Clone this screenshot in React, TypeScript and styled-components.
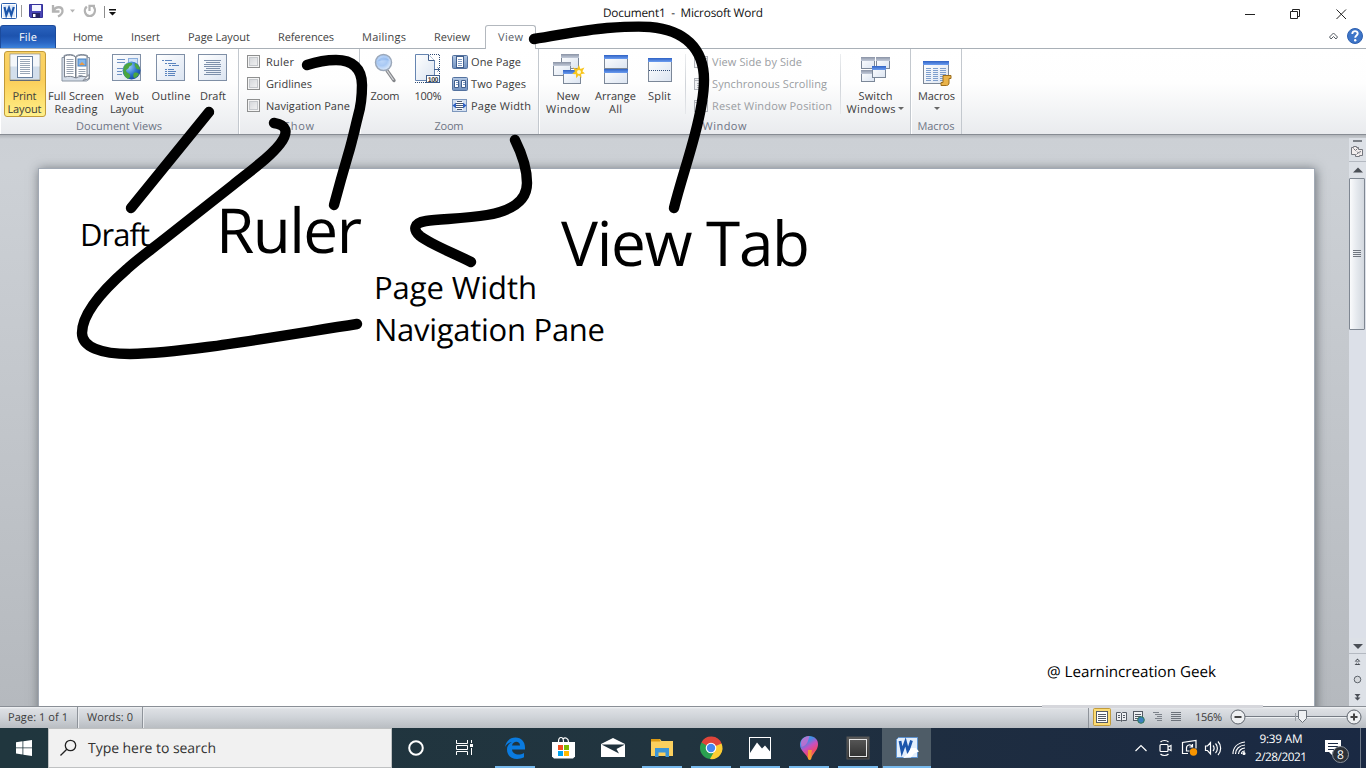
import React, { useLayoutEffect, useRef } from "react";
import styled, { createGlobalStyle, css } from "styled-components";

const GlobalStyle = createGlobalStyle`
  * {
    box-sizing: border-box;
  }

  body {
    margin: 0;
    overflow: hidden;
    background: #fff;
    font-family: "Open Sans", "Noto Sans", sans-serif;
    text-rendering: geometricPrecision;
  }

  svg {
    display: block;
    flex-shrink: 0;
  }
`;

const Screen = styled.div`
  width: 1366px;
  height: 768px;
  display: flex;
  flex-direction: column;
  position: relative;
  overflow: hidden;
`;

/* ---------- text ---------- */

const TextSpan = styled.span`
  display: inline-block;
  white-space: pre;
`;

interface FitProps {
  width: number;
  children: string;
}

// spreads the letters so that the text takes the given width
const Fit: React.FC<FitProps> = ({ width, children }) => {
  const ref = useRef<HTMLSpanElement>(null);

  useLayoutEffect(() => {
    const el = ref.current;
    if (!el) return;
    el.style.letterSpacing = "0px";
    const natural = el.getBoundingClientRect().width;
    const spacing = (width - natural) / Math.max(children.length - 1, 1);
    el.style.letterSpacing = `${spacing}px`;
    el.style.marginRight = `${-spacing}px`;
  }, [width, children]);

  return <TextSpan ref={ref}>{children}</TextSpan>;
};

/* ---------- title bar ---------- */

const TitleBar = styled.header`
  height: 25px;
  display: grid;
  grid-template-columns: 603px 1fr 139px;
  background: #fff;
`;

const QuickAccess = styled.div`
  display: flex;
  align-items: flex-start;
`;

const Caption = styled.div`
  font-size: 11.8px;
  line-height: 27px;
  color: #111;
`;

const WindowButtons = styled.div`
  display: flex;
`;

/* ---------- tabs ---------- */

const TabBar = styled.nav`
  height: 24px;
  display: flex;
  background: #fff;
  border-bottom: 1px solid #a9b0b7;
`;

const FileTab = styled.div`
  width: 56px;
  height: 23px;
  margin-right: 3px;
  border: 1px solid #1c4b9c;
  border-bottom: none;
  border-radius: 3px 3px 0 0;
  background: linear-gradient(#2a62bd, #1d53ae 45%, #2a66c4 75%, #3d83dc);
  color: #fff;
  font-size: 11px;
  line-height: 23px;
  text-align: center;
`;

const Tab = styled.div<{ $width: number; $active?: boolean }>`
  width: ${(p) => p.$width}px;
  height: 23px;
  font-size: 11px;
  line-height: 25px;
  color: #444;
  text-align: center;

  ${(p) =>
    p.$active &&
    css`
      height: 24px;
      margin-left: 1px;
      border: 1px solid #b3b8be;
      border-bottom: none;
      border-radius: 3px 3px 0 0;
      background: #fff;
      color: #5a6069;
      line-height: 23px;
    `}
`;

const TabTools = styled.div`
  margin-left: auto;
  width: 39px;
  display: flex;
`;

/* ---------- ribbon ---------- */

const RibbonBar = styled.section`
  height: 86px;
  display: flex;
  background: linear-gradient(#fff, #fefefe 40%, #e9ebee);
  border-bottom: 1px solid #878c93;
`;

const Group = styled.div<{ $width: number }>`
  width: ${(p) => p.$width}px;
  display: flex;
  flex-direction: column;
  border-right: 1px solid #c3c8ce;
  box-shadow: inset 1px 0 #fff;
`;

const GroupBody = styled.div<{ $pad: number }>`
  height: 69px;
  padding: 2px 0 0 ${(p) => p.$pad}px;
  display: flex;
`;

const GroupName = styled.div`
  height: 16px;
  font-size: 11px;
  line-height: 17px;
  color: #6d7484;
  text-align: center;
`;

const BigButton = styled.div<{ $width: number; $active?: boolean }>`
  width: ${(p) => p.$width}px;
  height: 66px;
  display: flex;
  flex-direction: column;
  align-items: center;
  flex-shrink: 0;
  padding-top: 1px;
  color: #3b3b3b;
  font-size: 11px;
  line-height: 13px;
  border: 1px solid transparent;
  border-radius: 3px;

  ${(p) =>
    p.$active &&
    css`
      padding-right: 1px;
      border-color: #c29b3a;
      background: linear-gradient(#f9d266, #fbcf5c 45%, #fdde6d 70%, #fff08a);
    `}
`;

const BigIcon = styled.div`
  height: 34px;
  margin-bottom: 3px;
`;

const SmallColumn = styled.div<{ $muted?: boolean }>`
  display: flex;
  flex-direction: column;
  color: ${(p) => (p.$muted ? "#9a9da2" : "#3b3b3b")};
`;

const SmallRow = styled.div<{ $gap: number }>`
  height: 22px;
  display: flex;
  align-items: center;
  gap: ${(p) => p.$gap}px;
  font-size: 11px;
`;

const CheckBox = styled.span`
  width: 13px;
  height: 13px;
  margin-bottom: 2px;
  border: 1px solid #8e8f8f;
  background: linear-gradient(135deg, #cfd2d6, #f6f6f6);
  box-shadow: inset 0 0 0 1px #f4f4f4, inset 0 0 0 2px #c4c7cb;
`;

const Divider = styled.div<{ $left: number; $right: number }>`
  width: 1px;
  height: 60px;
  margin: 3px ${(p) => p.$right}px 0 ${(p) => p.$left}px;
  background: linear-gradient(#eceef0, #cfd3d8 50%, #e6e8eb);
`;

const ArrowDown = styled.i<{ $top?: boolean }>`
  display: ${(p) => (p.$top ? "block" : "inline-block")};
  margin-top: ${(p) => (p.$top ? 4 : 0)}px;
  border: 3px solid transparent;
  border-top-color: #666;
  border-bottom: none;
  vertical-align: 3px;
`;

/* ---------- document area ---------- */

const Workspace = styled.main`
  height: 571px;
  display: flex;
  justify-content: space-between;
  background: linear-gradient(#b0b4b9, #ccd0d5 4px, #cdd1d6 30px, #b5b9be);
  overflow: hidden;
`;

const Page = styled.div`
  width: 1275px;
  height: 560px;
  margin: 34px 0 0 39px;
  background: #fff;
  box-shadow: 0 0 0 1px #a1a9b4, 1px 1px 10px 1px rgba(50, 56, 64, 0.62);
`;

const ScrollBar = styled.div`
  width: 17px;
  height: 571px;
  padding-top: 3px;
  display: flex;
  flex-direction: column;
`;

const ScrollCell = styled.div<{ $height: number; $line?: boolean }>`
  height: ${(p) => p.$height}px;
  background: #dde1e7;
  border-bottom: ${(p) => (p.$line ? "1px solid #b4b9c1" : "none")};
`;

const ScrollTrack = styled.div`
  height: 460px;
  background: #dce0e8;
`;

const ScrollThumb = styled.div`
  height: 152px;
  width: 16px;
  border: 1px solid #7f8792;
  border-radius: 1px;
  background: linear-gradient(90deg, #fafbfc, #e4e8ed 50%, #d3d8df);
  display: flex;
  align-items: center;
  justify-content: center;
`;

const Note = styled.div<{ $x: number; $y: number; $size: number; $line: number }>`
  position: absolute;
  left: ${(p) => p.$x}px;
  top: ${(p) => p.$y}px;
  font-size: ${(p) => p.$size}px;
  line-height: ${(p) => p.$line}px;
  color: #000;
`;

const Smudge = styled.div`
  position: absolute;
  left: 1042px;
  top: 705px;
  width: 221px;
  height: 3px;
  background: #d6d7dc;
`;

const Ink = styled.svg`
  position: absolute;
  left: 0;
  top: 0;
  fill: none;
  stroke: #000;
  stroke-width: 10.4;
  stroke-linecap: round;
  stroke-linejoin: round;
`;

/* ---------- status bar ---------- */

const StatusBar = styled.footer`
  height: 22px;
  display: flex;
  border-top: 1px solid #8a8f96;
  background: linear-gradient(#f2f4f6, #dde0e4 2px, #cfd3d8 50%, #b9bdc2);
  color: #3c3c3c;
  font-size: 11px;
  line-height: 21px;
`;

const StatusCell = styled.div<{ $width: number; $pad: number }>`
  width: ${(p) => p.$width}px;
  padding-left: ${(p) => p.$pad}px;
  border-right: 1px solid #8e939a;
  box-shadow: 1px 0 #e8eaed;
`;

const ViewTools = styled.div`
  width: 278px;
  margin-left: auto;
  display: flex;
  border-left: 1px solid #8e939a;
`;

const ViewIcons = styled.div`
  width: 106px;
`;

const ZoomValue = styled.div`
  width: 35px;
`;

/* ---------- taskbar ---------- */

const TaskBar = styled.footer`
  height: 40px;
  display: flex;
  background: linear-gradient(90deg, #20363e, #21343f 50%, #1e2d40 68%, #1a2943);
`;

const StartButton = styled.div`
  width: 48px;
  padding: 12px 0 0 16px;
`;

const SearchBox = styled.div`
  width: 344px;
  display: flex;
  border: 1px solid #bfc1c2;
  background: #f1f1f1;
  color: #333;
  font-size: 14px;
  line-height: 40px;
`;

const TaskItem = styled.div<{ $width: number; $active?: boolean; $open?: boolean }>`
  width: ${(p) => p.$width}px;
  height: 40px;
  display: flex;
  flex-direction: column;
  align-items: center;
  justify-content: space-between;
  background: ${(p) => (p.$active ? "#4e5c67" : "transparent")};

  &::after {
    content: "";
    width: ${(p) => (p.$active ? "48px" : "40px")};
    height: 2px;
    background: ${(p) => (p.$open ? "#76b9ed" : "transparent")};
  }
`;

const Tray = styled.div`
  width: 237px;
  margin-left: auto;
  display: flex;
`;

const Clock = styled.div`
  width: 56px;
  padding-top: 2px;
  color: #fff;
  font-size: 11.8px;
  line-height: 18px;
  text-align: center;
`;

const ActionCenter = styled.div`
  width: 52px;
  height: 40px;
  padding-left: 16px;
  position: relative;
  border-right: 1px solid #6d7887;
`;

const Badge = styled.span`
  position: absolute;
  left: 23px;
  top: 18px;
  width: 17px;
  height: 17px;
  border: 1px solid #8b929b;
  border-radius: 50%;
  background: #2b3037;
  color: #fff;
  font-size: 12px;
  line-height: 15px;
  text-align: center;
`;

/* ---------- drawings ---------- */

const Gradients = () => (
  <svg width="0" height="0" style={{ position: "absolute" }}>
    <defs>
      <linearGradient id="sheet" x1="0" y1="0" x2="1" y2="1">
        <stop offset="0" stopColor="#fff" />
        <stop offset="1" stopColor="#dbe4f1" />
      </linearGradient>
      <linearGradient id="blueBar" x1="0" y1="0" x2="0" y2="1">
        <stop offset="0" stopColor="#2f62c4" />
        <stop offset="1" stopColor="#6c9df0" />
      </linearGradient>
      <linearGradient id="greyBar" x1="0" y1="0" x2="0" y2="1">
        <stop offset="0" stopColor="#8a93a5" />
        <stop offset="1" stopColor="#c3cbda" />
      </linearGradient>
      <linearGradient id="blueTile" x1="0" y1="0" x2="0" y2="1">
        <stop offset="0" stopColor="#b3c8e4" />
        <stop offset="1" stopColor="#6f90bf" />
      </linearGradient>
      <radialGradient id="globe" cx=".35" cy=".3" r=".8">
        <stop offset="0" stopColor="#9cd0f5" />
        <stop offset=".55" stopColor="#2c74cf" />
        <stop offset="1" stopColor="#123f96" />
      </radialGradient>
      <radialGradient id="glass" cx=".4" cy=".35" r=".7">
        <stop offset="0" stopColor="#c2dafa" />
        <stop offset=".5" stopColor="#a9c9f4" />
        <stop offset="1" stopColor="#e6f0fc" />
      </radialGradient>
      <linearGradient id="drop" x1="0" y1="0" x2=".5" y2="1">
        <stop offset="0" stopColor="#25c4ee" />
        <stop offset=".35" stopColor="#4d86e4" />
        <stop offset=".55" stopColor="#c451c2" />
        <stop offset=".8" stopColor="#f0476c" />
        <stop offset="1" stopColor="#f8a22c" />
      </linearGradient>
      <linearGradient id="box" x1="0" y1="0" x2="0" y2="1">
        <stop offset="0" stopColor="#5b5b5b" />
        <stop offset="1" stopColor="#2d2d2d" />
      </linearGradient>
    </defs>
  </svg>
);

const QuickIcons = () => (
  <svg width="124" height="25">
    <rect x="1.500" y="3.500" width="15" height="15" rx="1" fill="#fff" stroke="#2b5fad" />
    <rect x="3" y="5" width="12" height="12" fill="#dfeafa" />
    <path d="M4.500 7l1.800 8L9 8l2.300 7 2.500-8" fill="none" stroke="#1c56ab" strokeWidth="2.200" />
    <path d="M21.500 5v12" stroke="#9a9a9a" />
    <path d="M29.500 4.500h13v13h-12l-1-1z" fill="#4a46b4" stroke="#35329b" />
    <rect x="32" y="5" width="9" height="6" fill="#f4f6ff" />
    <rect x="32" y="13" width="8" height="5" fill="#272565" />
    <rect x="33" y="14" width="2.500" height="3" fill="#fff" />
    <path d="M53 5v6.500h6.500M53.500 11c2-5 9-5 9 0 0 2-1.500 4-4.500 5.500" fill="none" stroke="#b3b3b3" strokeWidth="2.300" />
    <path d="M70 9.500h5l-2.500 3z" fill="#b3b3b3" />
    <path d="M93.500 6.500c3 3.500 1 9.500-3.700 9.500s-6.700-6-3-9.500M89.500 11V5.800H95" fill="none" stroke="#b3b3b3" strokeWidth="2.200" />
    <path d="M104.500 6v12" stroke="#8c8c8c" />
    <path d="M109 9h7v1.500h-7zM109 12h7l-3.500 3.500z" fill="#111" />
  </svg>
);

const WindowIcons = () => (
  <svg width="139" height="25" fill="none" stroke="#222">
    <path d="M18 14.500h10" />
    <path d="M63.500 11.500h7v7h-7zM65.500 11.500v-2h7v7h-2" />
    <path d="M109.500 9.500l9.500 9.500M119 9.500L109.500 19" />
  </svg>
);

const TabToolIcons = () => (
  <svg width="39" height="23">
    <path d="M2.500 12l4-4 4 4-1.500 2-2.500-2.500L4 14z" fill="#fff" stroke="#555b63" />
    <circle cx="28" cy="11" r="7.500" fill="#3d75c8" stroke="#2e60b0" />
    <path d="M25.300 9c0-4 5.600-3.500 5.400-.3-.2 1.800-2.500 1.800-2.500 4" fill="none" stroke="#fff" strokeWidth="1.900" />
    <circle cx="28.200" cy="15.300" r="1.200" fill="#fff" />
  </svg>
);

const SHEET_LINES = [0, 1, 2, 3, 4, 5, 6, 7];

const PrintLayoutIcon = () => (
  <svg width="32" height="30">
    <rect x="1" y="1" width="30" height="26" fill="#d3dfec" stroke="#a9a28a" />
    <path d="M1.500 1.500h29v12h-29z" fill="#fff" opacity=".75" />
    <path d="M1 27.500h30" stroke="#666c75" />
    <rect x="8.500" y="3.500" width="15" height="21" fill="#fff" stroke="#68809f" />
    {SHEET_LINES.map((n) => (
      <path key={n} d={`M11 ${6.500 + n * 2}h10`} stroke="#9aa7b7" />
    ))}
  </svg>
);

const ReadingIcon = () => (
  <svg width="32" height="30">
    <path d="M2 4.500h2v-2c4-1.500 9-1.500 11.500 1 2.500-2.500 8-2.500 12-1v2h2V26l-3 2H2z" fill="#d5dde8" stroke="#8994a2" />
    <path d="M4.500 3c4-1.500 8.500-1.200 11 1v21c-3-2-7-2-11-1zM27 3c-4-1.500-8.500-1.200-11 1v21c3-2 7-2 11-1z" fill="#fff" stroke="#7b828e" />
    {SHEET_LINES.map((n) => (
      <path key={n} d={`M6.500 ${6.500 + n * 2}h7`} stroke="#9aa4b2" />
    ))}
    <path d="M18.500 16.500h7M18.500 18.500h7M18.500 20.500h7M18.500 22.500h4" stroke="#9aa4b2" />
    <rect x="18" y="6" width="8" height="7" fill="#7fb5ec" stroke="#4b81bd" />
    <path d="M19 12l3-3 3 3z" fill="#e99a45" />
    <path d="M23 27.500l6-6v4z" fill="#fff" stroke="#7b828e" />
  </svg>
);

const WebIcon = () => (
  <svg width="32" height="30">
    <rect x="1.500" y="1.500" width="28" height="26" fill="url(#sheet)" stroke="#7f8fa6" />
    <path d="M6 6.500h8M6 9.500h8M6 15.500h6M6 18.500h5M6 21.500h5" stroke="#6d91c4" />
    <rect x="17.500" y="5.500" width="9" height="6" fill="#cfe2f8" stroke="#8aaddb" />
    <circle cx="20.500" cy="17.500" r="9" fill="url(#globe)" />
    <path d="M13 13c2-3 6-4 8-3 1 2-2 3-3 4 0 2-3 2-3 4 1 2 3 2 4 4s-1 3-2 4c-4-2-6-7-4-13z" fill="#4ba63e" />
    <path d="M24 10c3 1 5 4 5 7-1-1-3 0-4-2s-2-3-1-5zM23 20c2-1 4 0 5 1-1 2-3 4-5 4-1-2-1-4 0-5z" fill="#4ba63e" />
  </svg>
);

const OutlineIcon = () => (
  <svg width="32" height="30" stroke="#5b84be">
    <rect x="1.500" y="1.500" width="28" height="26" fill="url(#sheet)" stroke="#7f8fa6" />
    <path d="M7 7.500h2M10 7.500h7" />
    <path d="M10 10.500h2M13 10.500h8M14 12.500h2M17 12.500h7" />
    <path d="M10 16.500h2M13 16.500h6M10 18.500h2M13 18.500h8M10 20.500h2M13 20.500h7M10 22.500h2M13 22.500h7" />
  </svg>
);

const DraftIcon = () => (
  <svg width="32" height="30" stroke="#7d90ab">
    <rect x="1.500" y="1.500" width="28" height="26" fill="url(#sheet)" stroke="#7f8fa6" />
    <path d="M7 7.500h17M9 9.500h14M7 11.500h17M7 13.500h17M9 15.500h14M7 17.500h17M9 19.500h15M7 21.500h17" />
  </svg>
);

const ZoomIcon = () => (
  <svg width="32" height="30">
    <path d="M18 17.500l7 10" stroke="#85878b" strokeWidth="3.400" strokeLinecap="round" />
    <path d="M18 17.500l6.500 9.500" stroke="#d5d7da" strokeWidth="1.300" />
    <circle cx="14.500" cy="9.500" r="8" fill="url(#glass)" stroke="#9ba8ba" strokeWidth="1.500" />
    <path d="M8.500 8.500c3-5 8-5 12-1-5-.5-8 0-12 1z" fill="#82aeea" opacity=".5" />
  </svg>
);

const HundredIcon = () => (
  <svg width="32" height="32">
    <path d="M18 1.500h9.500v20M3 29.500h12" fill="none" stroke="#2e4a73" strokeDasharray="1 1" />
    <path d="M3.500 1.500h13l6 6v20h-19z" fill="url(#sheet)" stroke="#6685b1" />
    <path d="M16.500 1.500v6h6" fill="#fff" stroke="#405e8c" />
    <path d="M22 16.500h5M25.500 14.500l2 2-2 2" fill="none" stroke="#405e8c" />
    <rect x="14.500" y="22.500" width="13" height="7" fill="#fff" stroke="#405e8c" />
    <text x="15.700" y="28.700" fontSize="7" fontWeight="700" fontFamily="Liberation Sans" fill="#333" textLength="10.800">100</text>
  </svg>
);

const OnePageIcon = () => (
  <svg width="16" height="16">
    <rect x=".5" y="1.500" width="15" height="13" rx="1" fill="url(#blueTile)" stroke="#54729f" />
    <rect x="4.500" y="2.500" width="7" height="11" fill="#fff" stroke="#405e8c" />
    <path d="M6 5.500h4M6 7.500h4M6 9.500h4M6 11.500h4" stroke="#7f9bc4" />
  </svg>
);

const TwoPagesIcon = () => (
  <svg width="16" height="16">
    <rect x=".5" y="1.500" width="15" height="13" rx="1" fill="url(#blueTile)" stroke="#54729f" />
    <path d="M2.500 4.500h4v7h-4zM9.500 4.500h4v7h-4z" fill="#fff" stroke="#405e8c" />
    <path d="M4 6.500h2M4 8.500h2M11 6.500h2M11 8.500h2" stroke="#7f9bc4" />
  </svg>
);

const PageWidthIcon = () => (
  <svg width="16" height="16">
    <rect x=".5" y="1.500" width="14" height="12" fill="#d2dff0" stroke="#7d97bd" />
    <ellipse cx="7.500" cy="7.500" rx="5" ry="5" fill="#fff" />
    <path d="M5 3.500h5M4 5.500h7M4 7.500h7M4 9.500h7M5 11.500h5" stroke="#4a5a73" />
    <path d="M4 4.500v6L.5 7.500zM11 4.500v6l3.500-3z" fill="#2f62c4" />
  </svg>
);

interface PaneProps {
  x: number;
  y: number;
  w: number;
  h: number;
  bar?: string;
}

const Pane: React.FC<PaneProps> = ({ x, y, w, h, bar = "blueBar" }) => (
  <g>
    <rect x={x + 0.5} y={y + 0.5} width={w - 1} height={h - 1} fill="url(#sheet)" stroke="#7b8798" />
    <rect x={x} y={y} width={w} height="4" fill={`url(#${bar})`} />
  </g>
);

const NewWindowIcon = () => (
  <svg width="34" height="34">
    <Pane x={10} y={1} w={18} h={15} bar="greyBar" />
    <Pane x={2} y={9} w={18} h={14} bar="greyBar" />
    <Pane x={12} y={17} w={18} h={14} />
    <path d="M28 12l1.400 4 4-1.500-2 3.800 2.600 2.200-3.800.5.300 4-2.700-2.800-2.800 3v-4l-3.800-.3 2.800-2.700-2-3.700 4 1.500z" fill="#f8c51c" />
    <circle cx="28" cy="19" r="2" fill="#fffbd0" />
  </svg>
);

const ArrangeIcon = () => (
  <svg width="32" height="34">
    <Pane x={4} y={2} w={24} h={14} />
    <Pane x={4} y={16} w={24} h={15} />
  </svg>
);

const SplitIcon = () => (
  <svg width="32" height="34">
    <Pane x={4} y={5} w={24} h={24} />
    <path d="M5 17.500h22" stroke="#2e4a73" strokeDasharray="1 1" />
  </svg>
);

const SwitchIcon = () => (
  <svg width="34" height="34">
    <Pane x={2} y={4} w={14} h={12} bar="greyBar" />
    <Pane x={17} y={4} w={14} h={12} bar="greyBar" />
    <Pane x={2} y={17} w={14} h={12} bar="greyBar" />
    <Pane x={13} y={13} w={14} h={12} />
  </svg>
);

const MacrosIcon = () => (
  <svg width="32" height="34">
    <Pane x={2} y={8} w={26} h={23} />
    {[0, 1, 2, 3, 4, 5, 6].map((n) => (
      <path key={n} d={`M5 ${15.500 + n * 2}h5M12 ${15.500 + n * 2}h5M19 ${15.500 + n * 2}h6`} stroke="#7f9fcd" />
    ))}
    <path d="M22 22.500h8v3h-2v4.500c0 1.500-1 2.500-2.500 2.500H20v-3h2v-4z" fill="#e9b34a" stroke="#9b6c1c" />
  </svg>
);

const MutedIcon = () => (
  <svg width="16" height="16" stroke="#b1b4ba">
    <rect x="1.500" y="2.500" width="13" height="11" fill="#f1f2f4" />
    <path d="M2 4.500h12M4 7.500h3M4 9.500h3M4 11.500h3M8.500 5v8" />
  </svg>
);

const SplitHandleIcon = () => (
  <svg width="17" height="23">
    <path d="M4 2h9v2H4z" fill="#7b8087" />
    <path d="M2.500 9.500h2v-1h3v1h2v2h4v6h-3v1h-4v-2h-4z" fill="#f3eeee" stroke="#74777e" />
    <path d="M4.500 10.500l2 2 2-2M8 13.500l2 2M7.500 16.500l2-2 2.500-1" fill="none" stroke="#74777e" />
  </svg>
);

const StatusViewIcons = () => (
  <svg width="106" height="21" stroke="#555b64">
    <rect x="4.500" y="1.500" width="17" height="17" rx="1" fill="#fcdc75" stroke="#c29b3a" />
    <rect x="7.500" y="4.500" width="11" height="11" fill="#fff" />
    <path d="M9 7.500h8M9 9.500h8M9 11.500h8M9 13.500h8" />
    <path d="M27.500 5.500h4l1 1 1-1h4v8h-4l-1 1-1-1h-4zM32.500 6v8" fill="#eef0f3" />
    <path d="M29 8.500h2M29 10.500h2M34 8.500h2M34 10.500h2" />
    <rect x="44.500" y="4.500" width="9" height="9" fill="#eef0f3" />
    <path d="M46 7.500h6M46 9.500h6M46 11.500h6" />
    <circle cx="52" cy="13" r="3.300" fill="#3c7fbe" stroke="#2f7a55" />
    <path d="M64 5.500h6M66 7.500h7M68 9.500h5M66 11.500h7M68 13.500h5" stroke="#7c828a" />
    <path d="M82 5.500h10M82 7.500h10M82 9.500h10M82 11.500h10M82 13.500h10" stroke="#6d737b" />
  </svg>
);

const ZoomSlider = () => (
  <svg width="136" height="21">
    <path d="M15 9.500h105" stroke="#757b84" />
    <path d="M15 10.500h105" stroke="#edf0f2" />
    <path d="M65.500 6v8" stroke="#9a9fa6" />
    <circle cx="8" cy="10" r="7" fill="#eef0f2" stroke="#5e646c" />
    <path d="M4.500 10h7" stroke="#444" strokeWidth="2" />
    <path d="M68.500 3.500h8v8l-4 4-4-4z" fill="#f0f2f4" stroke="#6b7179" />
    <circle cx="124" cy="10" r="7" fill="#eef0f2" stroke="#5e646c" />
    <path d="M120.500 10h7M124 6.500v7" stroke="#444" strokeWidth="2" />
  </svg>
);

const SearchIcon = () => (
  <svg width="39" height="38" fill="none" stroke="#222" strokeWidth="1.300">
    <circle cx="21.500" cy="16.500" r="5.200" />
    <path d="M17.800 20.200L11.500 26.500" />
  </svg>
);

const CortanaIcon = () => (
  <svg width="36" height="38" fill="none" stroke="#fff" strokeWidth="2">
    <circle cx="18" cy="20" r="6.800" />
  </svg>
);

const TaskViewIcon = () => (
  <svg width="36" height="38" fill="none" stroke="#fff">
    <path d="M9.500 12v3.500h11V12M9.500 27v-3.500h11V27M9.500 17.500h11v4h-11zM24.500 12v3M24.500 20v7" />
    <path d="M23 16h3v3h-3z" fill="#fff" stroke="none" />
  </svg>
);

const EdgeIcon = () => (
  <svg width="36" height="38">
    <path d="M8 19C9 13 13 9.500 18.500 9.500c6 0 9.500 4.500 9.500 10v2H15c.5 5 7 6.500 12 3.500v4.300c-8 4-17 .7-17-7.800 0-3.500 2-6 5-7.500-3 .5-5.500 2.500-7 5zm7-1.500h8c0-5-7-5-8 0z" fill="#0a7be0" />
  </svg>
);

const StoreIcon = () => (
  <svg width="36" height="38">
    <path d="M6 14h23v14.500L27 30.500H8L6 28.500z" fill="#fff" />
    <path d="M12.500 14c0-6 5-6 5 0M17 11c2-2 5.500-1 5.500 3" fill="none" stroke="#fff" strokeWidth="1.200" />
    <path d="M12 17h5v5h-5z" fill="#f25022" />
    <path d="M18 17h5v5h-5z" fill="#7fba00" />
    <path d="M12 23h5v5h-5z" fill="#00a4ef" />
    <path d="M18 23h5v5h-5z" fill="#ffb900" />
  </svg>
);

const MailIcon = () => (
  <svg width="36" height="38">
    <path d="M6 16l12-6 12 6v13H6z" fill="#fff" />
    <path d="M6.500 16.500h23.500l-8.500 4.500 2.500 4.500z" fill="#20333e" />
  </svg>
);

const FolderIcon = () => (
  <svg width="36" height="38">
    <path d="M7 11h9l1.500 2H29v15H7z" fill="#fbd05e" />
    <path d="M7 11h8.500l1 2.500H7z" fill="#dd9a12" />
    <path d="M11 20h14v9h-3.500v-4.500h-7V29H11z" fill="#3c95d6" />
  </svg>
);

const ChromeIcon = () => (
  <svg width="36" height="38">
    <circle cx="18" cy="20" r="11" fill="#2aa050" />
    <path d="M18 20L8.500 14.500A11 11 0 0 1 28.500 15.500L28 17z" fill="#e0443a" />
    <path d="M18 20l10.500-4.500A11 11 0 0 1 17 31l5-9z" fill="#fbcc33" />
    <circle cx="18" cy="20" r="5.300" fill="#fff" />
    <circle cx="18" cy="20" r="4.200" fill="#4486f0" />
  </svg>
);

const PhotosIcon = () => (
  <svg width="36" height="38">
    <rect x="7.500" y="9.500" width="21" height="21" fill="none" stroke="#fff" />
    <path d="M8 25l7-10.500 5 6 3-3 5.500 6.500v6.500H8z" fill="#fff" />
  </svg>
);

const PaintIcon = () => (
  <svg width="36" height="38">
    <path d="M18 8c6 0 9.500 4 9 9-.5 6-5.500 8-7 14.500l-2 .5-1-1.500C15.500 26 9 22.500 9 17s4-9 9-9z" fill="url(#drop)" />
    <path d="M10 15c0-4 4-7 8.500-7-1.500 5-2 9-8 11z" fill="#d768cb" opacity=".75" />
    <path d="M17 22h4l-1.500 9-1.500.8-1-1.300z" fill="#f8a22c" opacity=".85" />
  </svg>
);

const BoxIcon = () => (
  <svg width="36" height="38">
    <rect x="7" y="9" width="22" height="22" fill="url(#box)" stroke="#565656" />
    <rect x="9.500" y="11.500" width="17" height="17" fill="none" stroke="#e6e6e6" />
  </svg>
);

const WordIcon = () => (
  <svg width="36" height="38">
    <path d="M9.500 9.500h19v20h-21v-18z" fill="#e3eefb" stroke="#5d92d0" />
    <path d="M11 13l2 10.500 3.500-9.500 2.500 9.500 3.500-11" fill="none" stroke="#1c56ab" strokeWidth="2.800" />
    <path d="M22 20h5l3 3.500-5 2-3 4-8 .5 5-5z" fill="#fff" />
  </svg>
);

const TrayIcons = () => (
  <svg width="124" height="40" fill="none" stroke="#fff" strokeWidth="1.200">
    <path d="M6.500 23l5.500-5.500 5.500 5.500" />
    <rect x="31" y="16.500" width="8" height="7" rx="1" />
    <path d="M39 19l3-1.500v5L39 21M31.500 14c2-2 6-2 8 0M31.500 26c2 2 6 2 8 0" />
    <path d="M59 25.500h-5.500v-11L67 12.500v8" />
    <path d="M57.500 20c0-3.500 4.500-4 5.500-1.500M63.500 16v3h-3M57.500 20v3h3" />
    <circle cx="64.500" cy="24" r="3.700" fill="#f99500" stroke="none" />
    <path d="M76.500 18h2l3-3.500v11.500l-3-3.500h-2zM84 17.500c1.500 1.500 1.500 4 0 5.500M86.500 15.500c2.500 2.500 2.500 7 0 9.500M89 13.500c3.500 3.500 3.500 10 0 13.500" />
    <path d="M104 26c0-6 4-11 12-12M106.500 26c0-5 4-8.500 9.500-9M109.500 26c0-3.500 3-6 6.500-6M112.500 26c0-2 1.500-3 3.500-3" />
    <circle cx="115" cy="25.500" r="1" fill="#fff" />
  </svg>
);

/* ---------- data ---------- */

const TABS = [
  { name: "Home", width: 58, text: 30 },
  { name: "Insert", width: 57, text: 29 },
  { name: "Page Layout", width: 90, text: 62 },
  { name: "References", width: 84, text: 56 },
  { name: "Mailings", width: 72, text: 44 },
  { name: "Review", width: 64, text: 36 },
  { name: "View", width: 51, text: 25, active: true },
];

const TASKS = [
  { icon: <CortanaIcon />, width: 48 },
  { icon: <TaskViewIcon />, width: 50 },
  { icon: <EdgeIcon />, width: 49, open: true },
  { icon: <StoreIcon />, width: 49 },
  { icon: <MailIcon />, width: 49 },
  { icon: <FolderIcon />, width: 49, open: true },
  { icon: <ChromeIcon />, width: 49, open: true },
  { icon: <PhotosIcon />, width: 49, open: true },
  { icon: <PaintIcon />, width: 49, open: true },
  { icon: <BoxIcon />, width: 49, open: true },
  { icon: <WordIcon />, width: 49, open: true, active: true },
];

const NOTES = [
  { text: "Draft", x: 80, y: 214.5, size: 31, line: 40, width: 70 },
  { text: "Ruler", x: 216, y: 190, size: 62, line: 80, width: 146 },
  { text: "Page Width", x: 374, y: 268, size: 31, line: 40, width: 163 },
  { text: "Navigation Pane", x: 374, y: 310, size: 31, line: 40, width: 231 },
  { text: "View Tab", x: 561, y: 203, size: 62, line: 80, width: 249 },
  { text: "@ Learnincreation Geek", x: 1047, y: 662, size: 15.2, line: 20, width: 169 },
];

const STROKES = [
  "M209 112L131 208",
  "M274 123C287 125 289 132 280 144C270 157 253 169 233 185L167 237C152 249 139 258 127 269C103 290 82 314 82 333C82 347 101 354 130 354C182 353 255 340 357 324",
  "M307 65C319 61 328 60 336 60C352 60 362 68 362 85C362 97 361 106 358 116C355 128 352 142 348 155C343 172 338 190 334 205",
  "M534 39C560 35 583 30 607 28C621 27 637 26 650 27C684 30 704 48 704 80C704 97 700 115 695 134C688 161 680 184 674 208",
  "M515 140C522 154 527 170 527 183C527 203 509 211 487 215C466 218.500 441 219 426 221C413 223 413 230 420 236C430 244 451 252 471 262",
];

interface ButtonProps {
  icon: React.ReactNode;
  width: number;
  lines: [string, number][];
  active?: boolean;
  children?: React.ReactNode;
}

const RibbonButton: React.FC<ButtonProps> = ({ icon, width, lines, active, children }) => (
  <BigButton $width={width} $active={active}>
    <BigIcon>{icon}</BigIcon>
    {lines.map(([text, w], index) => (
      <div key={text}>
        <Fit width={w}>{text}</Fit>
        {index === 1 && children}
      </div>
    ))}
    {lines.length === 1 && children}
  </BigButton>
);

const Ribbon = () => (
  <RibbonBar>
    <Group $width={239}>
      <GroupBody $pad={4}>
        <RibbonButton icon={<PrintLayoutIcon />} width={42} lines={[["Print", 24], ["Layout", 34]]} active />
        <RibbonButton icon={<ReadingIcon />} width={60} lines={[["Full Screen", 56], ["Reading", 43]]} />
        <RibbonButton icon={<WebIcon />} width={42} lines={[["Web", 24], ["Layout", 34]]} />
        <RibbonButton icon={<OutlineIcon />} width={46} lines={[["Outline", 39]]} />
        <RibbonButton icon={<DraftIcon />} width={38} lines={[["Draft", 26]]} />
      </GroupBody>
      <GroupName><Fit width={86}>Document Views</Fit></GroupName>
    </Group>
    <Group $width={121}>
      <GroupBody $pad={8}>
        <SmallColumn>
          <SmallRow $gap={6}><CheckBox /><Fit width={28}>Ruler</Fit></SmallRow>
          <SmallRow $gap={6}><CheckBox /><Fit width={46}>Gridlines</Fit></SmallRow>
          <SmallRow $gap={6}><CheckBox /><Fit width={84}>Navigation Pane</Fit></SmallRow>
        </SmallColumn>
      </GroupBody>
      <GroupName><Fit width={30}>Show</Fit></GroupName>
    </Group>
    <Group $width={179}>
      <GroupBody $pad={6}>
        <RibbonButton icon={<ZoomIcon />} width={38} lines={[["Zoom", 29]]} />
        <RibbonButton icon={<HundredIcon />} width={48} lines={[["100%", 27]]} />
        <SmallColumn>
          <SmallRow $gap={3}><OnePageIcon /><Fit width={50}>One Page</Fit></SmallRow>
          <SmallRow $gap={3}><TwoPagesIcon /><Fit width={55}>Two Pages</Fit></SmallRow>
          <SmallRow $gap={3}><PageWidthIcon /><Fit width={60}>Page Width</Fit></SmallRow>
        </SmallColumn>
      </GroupBody>
      <GroupName><Fit width={29}>Zoom</Fit></GroupName>
    </Group>
    <Group $width={372}>
      <GroupBody $pad={4}>
        <RibbonButton icon={<NewWindowIcon />} width={50} lines={[["New", 23], ["Window", 44]]} />
        <RibbonButton icon={<ArrangeIcon />} width={45} lines={[["Arrange", 41], ["All", 13]]} />
        <RibbonButton icon={<SplitIcon />} width={43} lines={[["Split", 23]]} />
        <Divider $left={4} $right={7} />
        <SmallColumn $muted>
          <SmallRow $gap={3}><MutedIcon /><Fit width={90}>View Side by Side</Fit></SmallRow>
          <SmallRow $gap={3}><MutedIcon /><Fit width={115}>Synchronous Scrolling</Fit></SmallRow>
          <SmallRow $gap={3}><MutedIcon /><Fit width={120}>Reset Window Position</Fit></SmallRow>
        </SmallColumn>
        <Divider $left={8} $right={4} />
        <RibbonButton icon={<SwitchIcon />} width={61} lines={[["Switch", 34], ["Windows", 49]]}>
          {" "}
          <ArrowDown />
        </RibbonButton>
      </GroupBody>
      <GroupName><Fit width={44}>Window</Fit></GroupName>
    </Group>
    <Group $width={51}>
      <GroupBody $pad={4}>
        <RibbonButton icon={<MacrosIcon />} width={43} lines={[["Macros", 37]]}>
          <ArrowDown $top />
        </RibbonButton>
      </GroupBody>
      <GroupName><Fit width={37}>Macros</Fit></GroupName>
    </Group>
  </RibbonBar>
);

const DocumentArea = () => (
  <Workspace>
    <Page />
    <ScrollBar>
      <ScrollCell $height={24} $line><SplitHandleIcon /></ScrollCell>
      <ScrollCell $height={16}>
        <svg width="17" height="16"><path d="M4 10.500h10l-5-5z" fill="#4a4f56" /></svg>
      </ScrollCell>
      <ScrollTrack>
        <ScrollThumb>
          <svg width="10" height="10" stroke="#70767f"><path d="M1 1.500h8M1 3.500h8M1 5.500h8M1 7.500h8" /></svg>
        </ScrollThumb>
      </ScrollTrack>
      <ScrollCell $height={16} $line>
        <svg width="17" height="15"><path d="M4 6h10l-5 5z" fill="#4a4f56" /></svg>
      </ScrollCell>
      <ScrollCell $height={52}>
        <svg width="17" height="52" fill="#4a4f56">
          <path d="M5.500 7.500h6L8.500 4.500zM5.500 11h6l-3-3zM7.700 6h1.600v4H7.700z" />
          <circle cx="8.500" cy="25.500" r="3.300" fill="#d5d8dc" stroke="#5e646c" />
          <path d="M5.500 40h6l-3 3zM5.500 43.500h6l-3 3zM7.700 41h1.600v4H7.700z" />
        </svg>
      </ScrollCell>
    </ScrollBar>
  </Workspace>
);

const App = () => (
  <Screen>
    <GlobalStyle />
    <Gradients />
    <TitleBar>
      <QuickAccess><QuickIcons /></QuickAccess>
      <Caption><Fit width={160}>Document1  -  Microsoft Word</Fit></Caption>
      <WindowButtons><WindowIcons /></WindowButtons>
    </TitleBar>
    <TabBar>
      <FileTab><Fit width={18}>File</Fit></FileTab>
      {TABS.map((tab) => (
        <Tab key={tab.name} $width={tab.width} $active={tab.active}>
          <Fit width={tab.text}>{tab.name}</Fit>
        </Tab>
      ))}
      <TabTools><TabToolIcons /></TabTools>
    </TabBar>
    <Ribbon />
    <DocumentArea />
    <StatusBar>
      <StatusCell $width={78} $pad={8}><Fit width={60}>Page: 1 of 1</Fit></StatusCell>
      <StatusCell $width={65} $pad={9}><Fit width={46}>Words: 0</Fit></StatusCell>
      <ViewTools>
        <ViewIcons><StatusViewIcons /></ViewIcons>
        <ZoomValue><Fit width={27}>156%</Fit></ZoomValue>
        <ZoomSlider />
      </ViewTools>
    </StatusBar>
    <TaskBar>
      <StartButton>
        <svg width="16" height="16" fill="#fff">
          <path d="M0 2.200l6.500-.9v6.200H0zM7.300 1.200L16 0v7.500H7.300zM0 8.300h6.500v6.200L0 13.600zM7.300 8.300H16V16l-8.700-1.300z" />
        </svg>
      </StartButton>
      <SearchBox><SearchIcon /><Fit width={128}>Type here to search</Fit></SearchBox>
      {TASKS.map((task, index) => (
        <TaskItem key={index} $width={task.width} $open={task.open} $active={task.active}>
          {task.icon}
        </TaskItem>
      ))}
      <Tray>
        <TrayIcons />
        <Clock>
          <div><Fit width={43}>9:39 AM</Fit></div>
          <div><Fit width={52}>2/28/2021</Fit></div>
        </Clock>
        <ActionCenter>
          <svg width="16" height="30"><path d="M0 12h16v12H7.500v3.500L4 24H0z" fill="#fff" /><path d="M3 15.500h10M3 18.500h10M3 21.500h6" stroke="#1a2943" /></svg>
          <Badge>8</Badge>
        </ActionCenter>
      </Tray>
    </TaskBar>
    <Smudge />
    {NOTES.map((note) => (
      <Note key={note.text} $x={note.x} $y={note.y} $size={note.size} $line={note.line}>
        <Fit width={note.width}>{note.text}</Fit>
      </Note>
    ))}
    <Ink width="1366" height="768">
      {STROKES.map((d) => (
        <path key={d} d={d} />
      ))}
    </Ink>
  </Screen>
);

export default App;
